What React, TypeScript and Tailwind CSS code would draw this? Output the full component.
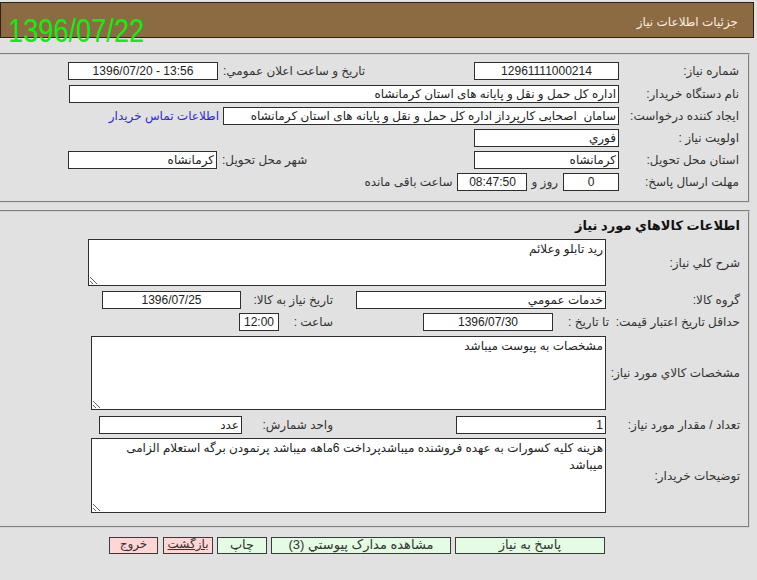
import React from "react";

const box =
  "h-[18px] border border-[#2e2e2e] bg-white text-[12px] leading-[16px] px-[2px] text-[#222] whitespace-nowrap overflow-hidden shrink-0";
const lbl = "text-[12px] leading-[16px] text-[#333] whitespace-nowrap";
const ta =
  "block border border-[#2e2e2e] bg-white text-[12px] leading-[17px] px-[2px] py-[1px] text-[#222] outline-none shrink-0";
const btn =
  "h-[17px] border-[1.5px] border-[#3a3a3a] leading-[13px] text-[#333] text-center shrink-0 overflow-hidden whitespace-nowrap";

export default function App() {
  return (
    <div className="relative w-[757px] h-[580px] overflow-hidden bg-[#e1e1e1] font-['Liberation_Sans','DejaVu_Sans',sans-serif]">
      {/* header */}
      <div
        dir="rtl"
        className="mt-[2px] w-[754px] h-[36px] bg-[#8c6b42] border border-[#2a2118] flex items-center pr-[15px] pt-[3px]"
      >
        <span className="text-[12px] text-[#f4efe6]">جزئیات اطلاعات نیاز</span>
      </div>
      <div className="absolute left-[8px] top-[13px] origin-left scale-x-[0.8] text-[34px] leading-[34px] text-[#0cf00c] whitespace-nowrap">
        1396/07/22
      </div>

      {/* section 1 */}
      <div
        dir="rtl"
        className="mt-[15px] w-[750px] border-2 border-l-0 [border-style:groove] border-[#d4d4d4] pt-[7px] pb-[10px]"
      >
        <div className="flex items-center h-[18px] pl-[68px]">
          <div className={`${lbl} w-[129px] pr-[9px] shrink-0`}>شماره نیاز:</div>
          <div dir="ltr" className={`${box} w-[145px] text-center`}>12961111000214</div>
          <div className="flex-1" />
          <div className={lbl}>تاريخ و ساعت اعلان عمومي:</div>
          <div dir="ltr" className={`${box} w-[150px] mr-[5px] text-center`}>1396/07/20 - 13:56</div>
        </div>
        <div className="flex items-center h-[18px] mt-[5px] pl-[68px]">
          <div className={`${lbl} w-[129px] pr-[9px] shrink-0`}>نام دستگاه خریدار:</div>
          <div className={`${box} w-[550px]`}>اداره کل حمل و نقل و پایانه های استان کرمانشاه</div>
        </div>
        <div className="flex items-center h-[18px] mt-[4px]">
          <div className={`${lbl} w-[129px] pr-[9px] shrink-0`}>ایجاد کننده درخواست:</div>
          <div className={`${box} w-[396px]`}>سامان&nbsp; اصحابی کارپرداز اداره کل حمل و نقل و پایانه های استان کرمانشاه</div>
          <a className="text-[12px] leading-[16px] text-[#2b2bd6] whitespace-nowrap mr-[4px]">اطلاعات تماس خريدار</a>
        </div>
        <div className="flex items-center h-[18px] mt-[4px]">
          <div className={`${lbl} w-[129px] pr-[9px] shrink-0`}>اولویت نیاز :</div>
          <div className={`${box} w-[145px]`}>فوري</div>
        </div>
        <div className="flex items-center h-[18px] mt-[4px] pl-[68px]">
          <div className={`${lbl} w-[129px] pr-[9px] shrink-0`}>استان محل تحویل:</div>
          <div className={`${box} w-[145px]`}>کرمانشاه</div>
          <div className="flex-1" />
          <div className={lbl}>شهر محل تحویل:</div>
          <div className={`${box} w-[149px] mr-[5px]`}>کرمانشاه</div>
        </div>
        <div className="flex items-center h-[18px] mt-[4px]">
          <div className={`${lbl} w-[129px] pr-[9px] shrink-0`}>مهلت ارسال پاسخ:</div>
          <div dir="ltr" className={`${box} w-[56px] text-center`}>0</div>
          <div className={`${lbl} mr-[5px]`}>روز و</div>
          <div dir="ltr" className={`${box} w-[70px] mr-[4px] text-center`}>08:47:50</div>
          <div className={`${lbl} mr-[5px]`}>ساعت باقی مانده</div>
        </div>
      </div>

      {/* section 2 */}
      <div
        dir="rtl"
        className="mt-[7px] w-[750px] border-2 border-l-0 [border-style:groove] border-[#d4d4d4] pt-[6px] pb-[13px]"
      >
        <div className="pr-[8px] text-[13px] leading-[16px] font-bold text-[#111] whitespace-nowrap">
          اطلاعات کالاهاي مورد نياز
        </div>
        <div className="flex items-center mt-[5px]">
          <div className={`${lbl} w-[142px] pr-[8px] shrink-0`}>شرح کلي نياز:</div>
          <textarea readOnly dir="rtl" className={`${ta} w-[518px] h-[47px]`} defaultValue="رید تابلو وعلائم" />
        </div>
        <div className="flex items-center h-[18px] mt-[5px]">
          <div className={`${lbl} w-[142px] pr-[8px] shrink-0`}>گروه کالا:</div>
          <div className="w-[273px] shrink-0">
            <div className={`${box} w-[250px]`}>خدمات عمومي</div>
          </div>
          <div className={`${lbl} w-[92px] shrink-0`}>تاریخ نیاز به کالا:</div>
          <div dir="ltr" className={`${box} w-[139px] text-center`}>1396/07/25</div>
        </div>
        <div className="flex items-center h-[18px] mt-[4px]">
          <div className={`${lbl} w-[142px] pr-[8px] shrink-0`}>حداقل تاريخ اعتبار قيمت:&nbsp; تا تاریخ :</div>
          <div className="w-[273px] shrink-0">
            <div dir="ltr" className={`${box} w-[130px] mr-[53px] text-center`}>1396/07/30</div>
          </div>
          <div className={`${lbl} w-[54px] shrink-0`}>ساعت :</div>
          <div dir="ltr" className={`${box} w-[40px] text-center`}>12:00</div>
        </div>
        <div className="flex items-center mt-[5px]">
          <div className={`${lbl} w-[142px] pr-[8px] shrink-0`}>مشخصات کالاي مورد نياز:</div>
          <textarea readOnly dir="rtl" className={`${ta} w-[515px] h-[74px]`} defaultValue="مشخصات به پیوست میباشد" />
        </div>
        <div className="flex items-center h-[18px] mt-[6px]">
          <div className={`${lbl} w-[142px] pr-[8px] shrink-0`}>تعداد / مقدار مورد نياز:</div>
          <div className="w-[273px] shrink-0">
            <div className={`${box} w-[150px]`}>1</div>
          </div>
          <div className={`${lbl} w-[91px] shrink-0`}>واحد شمارش:</div>
          <div className={`${box} w-[143px]`}>عدد</div>
        </div>
        <div className="flex items-center mt-[4px]">
          <div className={`${lbl} w-[142px] pr-[8px] shrink-0`}>توضیحات خریدار:</div>
          <textarea
            readOnly
            dir="rtl"
            className={`${ta} w-[515px] h-[75px]`}
            defaultValue="هزینه کلیه کسورات به عهده فروشنده میباشدپرداخت 6ماهه میباشد پرنمودن برگه استعلام الزامی میباشد"
          />
        </div>
      </div>

      {/* buttons */}
      <div dir="rtl" className="mt-[9px] w-[757px] pr-[152px] flex gap-[4px]">
        <div className={`${btn} text-[13px] w-[150px] bg-[#e4fce4]`}>پاسخ به نیاز</div>
        <div className={`${btn} text-[13px] w-[180px] bg-[#e4fce4]`}>مشاهده مدارک پیوستي (3)</div>
        <div className={`${btn} text-[13px] w-[50px] bg-[#e4fce4]`}>چاپ</div>
        <div className={`${btn} text-[12px] w-[50px] bg-[#fdd6d6] underline`}>بازگشت</div>
        <div className={`${btn} text-[12px] w-[49px] bg-[#fdd6d6] mr-[1px]`}>خروج</div>
      </div>
    </div>
  );
}
